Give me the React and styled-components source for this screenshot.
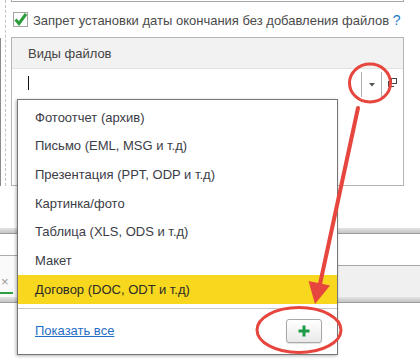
import React from 'react'
import styled, { createGlobalStyle } from 'styled-components'

const GlobalStyle = createGlobalStyle`
  html, body {
    margin: 0;
    padding: 0;
    background: #ffffff;
  }
  body {
    font-family: "Liberation Sans", Arial, sans-serif;
    font-size: 13px;
  }
`;

const Screen = styled.div`
  position: relative;
  width: 420px;
  height: 360px;
  overflow: hidden;
  background: #ffffff;
`;

const FormRow = styled.div`
  display: flex;
  height: 186px;
`;

const Gutter = styled.div`
  width: 5px;
  padding-top: 38px;
  display: flex;
`;

const GutterRule = styled.div`
  width: 0;
  border-left: 1px solid #8a8a8a;
`;

const FormWrap = styled.div`
  border-left: 1px dashed #c4c4c4;
  padding-left: 5px;
  width: 393px;
  display: flex;
  flex-direction: column;
`;

const TopBox = styled.div`
  height: 1px;
  border: 1px solid #a8a8a8;
  border-top: none;
`;

const CheckRow = styled.label`
  height: 35px;
  display: flex;
  align-items: center;
  gap: 5px;
  padding-left: 2px;
  color: #4a4a4a;
  font-size: 13px;
  white-space: nowrap;
`;

const CheckBox = styled.span`
  width: 13px;
  height: 13px;
  border: 1px solid #a4a4a4;
  background: #fff;
  display: flex;
  align-items: center;
  justify-content: center;
  flex-shrink: 0;
`;

const Help = styled.span`
  color: #1b7cc6;
  font-size: 14px;
  margin-left: 0;
`;

const FilesTable = styled.div`
  flex: 1;
  border: 1px solid #b4b4b4;
  display: flex;
  flex-direction: column;
`;

const TableHeader = styled.div`
  height: 30px;
  background: #f2f2f2;
  border-bottom: 1px solid #e2e2e2;
  display: flex;
  align-items: center;
  padding-left: 16px;
  color: #444;
  font-size: 13px;
`;

const InputRow = styled.div`
  height: 28px;
  display: flex;
  align-items: stretch;
`;

const InputCell = styled.div`
  flex: 1;
  display: flex;
  align-items: center;
  padding-left: 16px;
`;

const Caret = styled.span`
  width: 1px;
  height: 14px;
  background: #111;
`;

const DropButton = styled.div`
  width: 19px;
  margin-top: 3px;
  border-left: 1px solid #b0b0b0;
  border-right: 1px solid #b0b0b0;
  display: flex;
  align-items: center;
  justify-content: center;
`;

const OpenButton = styled.div`
  width: 21px;
  display: flex;
  align-items: center;
  justify-content: center;
`;

const Splitter = styled.div`
  height: 5px;
  background: linear-gradient(#e4e4e4, #c4c4c4);
  border-bottom: 1px solid #9c9c9c;
`;

const Gap = styled.div`
  height: 42px;
`;

const TabBar = styled.div`
  height: 63px;
  display: flex;
  align-items: flex-end;
`;

const ActiveTab = styled.div`
  width: 60px;
  height: 41px;
  border-top: 1px solid #ababab;
  background: #fafafa;
  display: flex;
  flex-direction: column;
  justify-content: flex-end;
`;

const TabClose = styled.span`
  color: #9a9a9a;
  font-size: 13px;
  line-height: 12px;
  padding-left: 1px;
  margin-bottom: 4px;
`;

const TabLine = styled.div`
  width: 13px;
  height: 2px;
  background: #2ea043;
  margin-bottom: 3px;
`;

const TabRest = styled.div`
  flex: 1;
  height: 31px;
  border-top: 1px solid #a8a8a8;
  background: #f0f0f0;
`;

const Popup = styled.div`
  position: absolute;
  left: 17px;
  top: 99px;
  width: 319px;
  height: 254px;
  border: 1px solid #767676;
  background: #fff;
  box-shadow: -1px 1px 3px rgba(0, 0, 0, 0.3);
  display: flex;
  flex-direction: column;
`;

const ItemList = styled.div`
  padding: 3px 0 4px;
  border-bottom: 1px solid #c8c8c8;
`;

const Item = styled.div`
  height: 28.67px;
  display: flex;
  align-items: center;
  padding-left: 17px;
  color: ${p => (p.$active ? '#2a2a2a' : '#3c3c46')};
  background: ${p => (p.$active ? '#f8d81e' : 'transparent')};
  font-size: 13px;
`;

const Footer = styled.div`
  flex: 1;
  display: flex;
  align-items: center;
  justify-content: space-between;
  padding: 0 15px 1px 17px;
`;

const ShowAll = styled.a`
  color: #1f6fc4;
  text-decoration: underline;
  font-size: 13px;
`;

const AddButton = styled.button`
  width: 36px;
  height: 24px;
  padding: 0;
  border: 1px solid #a8a8a8;
  border-radius: 3px;
  background: linear-gradient(#ffffff, #e9e9e9);
  box-shadow: 0 1px 1px rgba(0, 0, 0, 0.12);
  display: flex;
  align-items: center;
  justify-content: center;
`;

const Overlay = styled.svg`
  position: absolute;
  left: 0;
  top: 0;
  pointer-events: none;
`;

const fileTypes = [
  'Фотоотчет (архив)',
  'Письмо (EML, MSG и т.д)',
  'Презентация (PPT, ODP и т.д)',
  'Картинка/фото',
  'Таблица (XLS, ODS и т.д)',
  'Макет',
  'Договор (DOC, ODT и т.д)',
];

const App = () => {
  return (
    <Screen>
      <GlobalStyle />
      <FormRow>
        <Gutter><GutterRule /></Gutter>
        <FormWrap>
          <TopBox />
          <CheckRow>
            <CheckBox>
              <svg width="13" height="13" viewBox="0 0 13 13">
                <path d="M1.5 6.5 L5 10.5 L12 1" fill="none" stroke="#2d9c3c" strokeWidth="3" />
              </svg>
            </CheckBox>
            <span>Запрет установки даты окончания без добавления файлов <Help>?</Help></span>
          </CheckRow>
          <FilesTable>
            <TableHeader>Виды файлов</TableHeader>
            <InputRow>
              <InputCell><Caret /></InputCell>
              <DropButton>
                <svg width="6" height="4" viewBox="0 0 6 4">
                  <path d="M0 0 H6 L3 3.5 Z" fill="#555" />
                </svg>
              </DropButton>
              <OpenButton>
                <svg width="10" height="10" viewBox="0 0 10 10">
                  <rect x="3.5" y="0.5" width="5" height="5" fill="none" stroke="#444" />
                  <path d="M0.5 3 V8.5 H6" fill="none" stroke="#444" />
                </svg>
              </OpenButton>
            </InputRow>
          </FilesTable>
        </FormWrap>
      </FormRow>
      <Gap />
      <Splitter />
      <TabBar>
        <ActiveTab>
          <TabClose>×</TabClose>
          <TabLine />
        </ActiveTab>
        <TabRest />
      </TabBar>
      <Splitter />

      <Popup>
        <ItemList>
          {fileTypes.map((t, i) => (
            <Item key={t} $active={i === fileTypes.length - 1}>{t}</Item>
          ))}
        </ItemList>
        <Footer>
          <ShowAll href="#">Показать все</ShowAll>
          <AddButton>
            <svg width="12" height="12" viewBox="0 0 12 12">
              <path d="M6 0.5 V11.5 M0.5 6 H11.5" stroke="#1c9a45" strokeWidth="3" />
            </svg>
          </AddButton>
        </Footer>
      </Popup>

      <Overlay width="420" height="360" viewBox="0 0 420 360">
        <ellipse cx="370" cy="83" rx="20.5" ry="19" fill="none" stroke="#e6463d" strokeWidth="3" />
        <line x1="358" y1="108" x2="320" y2="284" stroke="#e6463d" strokeWidth="4" strokeLinecap="round" />
        <path d="M315 304 L308.5 281 L330 285.5 Z" fill="#e6463d" />
        <ellipse cx="299" cy="330" rx="42" ry="22.5" fill="none" stroke="#e6463d" strokeWidth="3" />
      </Overlay>
    </Screen>
  )
}

export default App
